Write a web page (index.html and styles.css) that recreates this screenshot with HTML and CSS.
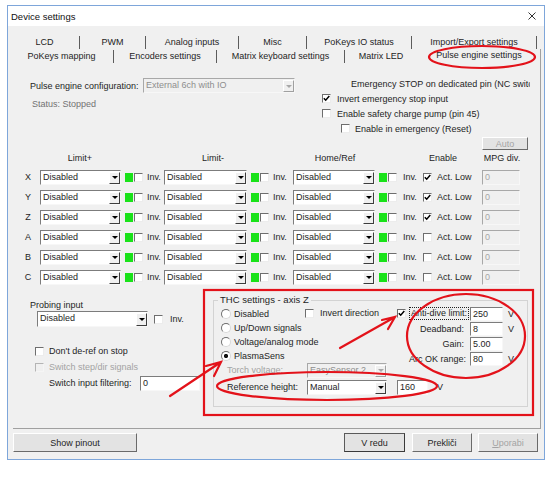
FILE: index.html
```html
<!DOCTYPE html>
<html>
<head>
<meta charset="utf-8">
<title>Device settings</title>
<link rel="stylesheet" href="styles.css">
</head>
<body>
<div class="window">
  <div class="titlebar">
    <span class="title">Device settings</span>
    <svg class="close" viewBox="0 0 8 8"><path d="M0.5 0.5L7.5 7.5M7.5 0.5L0.5 7.5"/></svg>
  </div>

  <div class="tabs">
    <div class="tabrow row1">
      <span class="tab">LCD</span>
      <span class="tab">PWM</span>
      <span class="tab">Analog inputs</span>
      <span class="tab">Misc</span>
      <span class="tab">PoKeys IO status</span>
      <span class="tab">Import/Export settings</span>
    </div>
    <div class="tabrow row2">
      <span class="tab">PoKeys mapping</span>
      <span class="tab">Encoders settings</span>
      <span class="tab">Matrix keyboard settings</span>
      <span class="tab nosep">Matrix LED</span>
      <span class="tab sel">Pulse engine settings</span>
    </div>
  </div>

  <div class="panel">
    <div class="top">
      <div class="top-left">
        <div class="cfg">
          <span class="cfg-label">Pulse engine configuration:</span>
          <span class="combo dis cfg-combo"><span class="v">External 6ch with IO</span><span class="dd"></span></span>
        </div>
        <div class="status">Status: Stopped</div>
      </div>
      <div class="top-right">
        <div class="estop">Emergency STOP on dedicated pin (NC switch)</div>
        <div class="chk"><span class="cb"><svg viewBox="0 0 7 7"><path d="M0.8 3.2L2.7 5.2L6.3 1"/></svg></span><span class="lbl">Invert emergency stop input</span></div>
        <div class="chk"><span class="cb"></span><span class="lbl">Enable safety charge pump (pin 45)</span></div>
        <div class="chk indent"><span class="cb"></span><span class="lbl">Enable in emergency (Reset)</span></div>
        <div class="btn auto dis-text">Auto</div>
      </div>
    </div>

    <div class="ghead">
      <span class="h-limp">Limit+</span>
      <span class="h-limm">Limit-</span>
      <span class="h-home">Home/Ref</span>
      <span class="h-en">Enable</span>
      <span class="h-mpg">MPG div.</span>
    </div>

    <div class="rows">
      <div class="axis">
        <span class="letter">X</span>
        <span class="combo c1"><span class="v">Disabled</span><span class="dd"></span></span>
        <span class="green"></span><span class="cb"></span><span class="inv">Inv.</span>
        <span class="combo c2"><span class="v">Disabled</span><span class="dd"></span></span>
        <span class="green"></span><span class="cb"></span><span class="inv inv2">Inv.</span>
        <span class="combo c3"><span class="v">Disabled</span><span class="dd"></span></span>
        <span class="green"></span><span class="cb"></span><span class="inv inv3">Inv.</span>
        <span class="cb"><svg viewBox="0 0 7 7"><path d="M0.8 3.2L2.7 5.2L6.3 1"/></svg></span><span class="act">Act. Low</span>
        <span class="inp dis mpg">0</span>
      </div>
      <div class="axis">
        <span class="letter">Y</span>
        <span class="combo c1"><span class="v">Disabled</span><span class="dd"></span></span>
        <span class="green"></span><span class="cb"></span><span class="inv">Inv.</span>
        <span class="combo c2"><span class="v">Disabled</span><span class="dd"></span></span>
        <span class="green"></span><span class="cb"></span><span class="inv inv2">Inv.</span>
        <span class="combo c3"><span class="v">Disabled</span><span class="dd"></span></span>
        <span class="green"></span><span class="cb"></span><span class="inv inv3">Inv.</span>
        <span class="cb"><svg viewBox="0 0 7 7"><path d="M0.8 3.2L2.7 5.2L6.3 1"/></svg></span><span class="act">Act. Low</span>
        <span class="inp dis mpg">0</span>
      </div>
      <div class="axis">
        <span class="letter">Z</span>
        <span class="combo c1"><span class="v">Disabled</span><span class="dd"></span></span>
        <span class="green"></span><span class="cb"></span><span class="inv">Inv.</span>
        <span class="combo c2"><span class="v">Disabled</span><span class="dd"></span></span>
        <span class="green"></span><span class="cb"></span><span class="inv inv2">Inv.</span>
        <span class="combo c3"><span class="v">Disabled</span><span class="dd"></span></span>
        <span class="green"></span><span class="cb"></span><span class="inv inv3">Inv.</span>
        <span class="cb"><svg viewBox="0 0 7 7"><path d="M0.8 3.2L2.7 5.2L6.3 1"/></svg></span><span class="act">Act. Low</span>
        <span class="inp dis mpg">0</span>
      </div>
      <div class="axis">
        <span class="letter">A</span>
        <span class="combo c1"><span class="v">Disabled</span><span class="dd"></span></span>
        <span class="green"></span><span class="cb"></span><span class="inv">Inv.</span>
        <span class="combo c2"><span class="v">Disabled</span><span class="dd"></span></span>
        <span class="green"></span><span class="cb"></span><span class="inv inv2">Inv.</span>
        <span class="combo c3"><span class="v">Disabled</span><span class="dd"></span></span>
        <span class="green"></span><span class="cb"></span><span class="inv inv3">Inv.</span>
        <span class="cb"></span><span class="act">Act. Low</span>
        <span class="inp dis mpg">0</span>
      </div>
      <div class="axis">
        <span class="letter">B</span>
        <span class="combo c1"><span class="v">Disabled</span><span class="dd"></span></span>
        <span class="green"></span><span class="cb"></span><span class="inv">Inv.</span>
        <span class="combo c2"><span class="v">Disabled</span><span class="dd"></span></span>
        <span class="green"></span><span class="cb"></span><span class="inv inv2">Inv.</span>
        <span class="combo c3"><span class="v">Disabled</span><span class="dd"></span></span>
        <span class="green"></span><span class="cb"></span><span class="inv inv3">Inv.</span>
        <span class="cb"></span><span class="act">Act. Low</span>
        <span class="inp dis mpg">0</span>
      </div>
      <div class="axis">
        <span class="letter">C</span>
        <span class="combo c1"><span class="v">Disabled</span><span class="dd"></span></span>
        <span class="green"></span><span class="cb"></span><span class="inv">Inv.</span>
        <span class="combo c2"><span class="v">Disabled</span><span class="dd"></span></span>
        <span class="green"></span><span class="cb"></span><span class="inv inv2">Inv.</span>
        <span class="combo c3"><span class="v">Disabled</span><span class="dd"></span></span>
        <span class="green"></span><span class="cb"></span><span class="inv inv3">Inv.</span>
        <span class="cb"></span><span class="act">Act. Low</span>
        <span class="inp dis mpg">0</span>
      </div>
    </div>

    <div class="bottom">
      <div class="bl">
        <div class="probe-label">Probing input</div>
        <div class="probe-row">
          <span class="combo probe-combo"><span class="v">Disabled</span><span class="dd"></span></span>
          <span class="cb"></span><span class="lbl">Inv.</span>
        </div>
        <div class="opts">
          <div class="opt"><span class="cb"></span><span class="lbl">Don't de-ref on stop</span></div>
          <div class="opt"><span class="cb dis"></span><span class="lbl dis-text">Switch step/dir signals</span></div>
          <div class="opt filter"><span class="filter-label">Switch input filtering:</span><span class="inp filter-input">0</span></div>
        </div>
      </div>

      <fieldset class="thc">
        <legend>THC settings - axis Z</legend>
        <div class="thc-top">
          <div class="radios">
            <div class="rrow"><span class="radio"></span><span class="lbl">Disabled</span></div>
            <div class="rrow"><span class="radio"></span><span class="lbl">Up/Down signals</span></div>
            <div class="rrow"><span class="radio"></span><span class="lbl">Voltage/analog mode</span></div>
            <div class="rrow"><span class="radio on"></span><span class="lbl">PlasmaSens</span></div>
          </div>
          <div class="invert">
            <div class="rrow"><span class="cb"></span><span class="lbl">Invert direction</span></div>
          </div>
          <div class="params">
            <span class="cb"><svg viewBox="0 0 7 7"><path d="M0.8 3.2L2.7 5.2L6.3 1"/></svg></span>
            <span class="plabel"><span class="focus">Anti-dive limit:</span></span>
            <span class="inp pin">250</span>
            <span class="unit">V</span>

            <span></span>
            <span class="plabel">Deadband:</span>
            <span class="inp pin">8</span>
            <span class="unit">V</span>

            <span></span>
            <span class="plabel">Gain:</span>
            <span class="inp pin">5.00</span>
            <span></span>

            <span></span>
            <span class="plabel">Arc OK range:</span>
            <span class="inp pin">80</span>
            <span class="unit">V</span>
          </div>
        </div>
        <div class="thc-row">
          <span class="tlabel dis-text">Torch voltage:</span>
          <span class="combo dis tcombo"><span class="v">EasySensor 2</span><span class="dd"></span></span>
        </div>
        <div class="thc-row ref">
          <span class="tlabel">Reference height:</span>
          <span class="combo tcombo"><span class="v">Manual</span><span class="dd"></span></span>
          <span class="inp refin">160</span>
          <span class="refv">V</span>
        </div>
      </fieldset>
    </div>
  </div>

  <div class="buttons">
    <div class="btn pinout">Show pinout</div>
    <div class="btn ok">V redu</div>
    <div class="btn cancel">Prekliči</div>
    <div class="btn apply dis-text"><u>U</u>porabi</div>
  </div>
</div>

<svg class="annot" viewBox="0 0 550 478" width="550" height="478">
  <g fill="none" stroke="#e3121a" stroke-width="2.2" stroke-linecap="round">
    <ellipse cx="482" cy="57" rx="53" ry="11"/>
    <rect x="204" y="290" width="329" height="125"/>
    <ellipse cx="466" cy="336" rx="59" ry="42"/>
    <ellipse cx="327" cy="386" rx="110" ry="14"/>
    <path d="M340 348L395 317M382 320L395 317L388 329"/>
    <path d="M170 396L221 362M206 366L221 362L214 376"/>
  </g>
</svg>
</body>
</html>
```

FILE: styles.css
```css
* { box-sizing: border-box; }

body {
  margin: 0;
  width: 550px;
  height: 478px;
  overflow: hidden;
  background: #ffffff;
  font-family: "Liberation Sans", Arial, sans-serif;
  font-size: 9px;
  color: #1e1e1e;
}

.window {
  margin: 5px 0 0 7px;
  width: 538px;
  height: 455px;
  border: 1px solid #7ea6da;
  background: #f0f0f0;
  display: flex;
  flex-direction: column;
}

.titlebar {
  height: 20px;
  flex: none;
  background: #ffffff;
  display: flex;
  align-items: center;
  padding-left: 3px;
  font-size: 9.5px;
  color: #111;
}

.close {
  width: 8px;
  height: 8px;
  margin-left: auto;
  margin-right: 8px;
  stroke: #333;
  stroke-width: 1;
  fill: none;
}

/* Tabs */
.tabs {
  margin-top: 9px;
  padding-left: 2px;
  flex: none;
}

.tabrow {
  display: grid;
  height: 14px;
  align-items: center;
}

.row1 { grid-template-columns: 70px 66px 93px 68px 105px 125px; }
.row2 { grid-template-columns: 104px 103px 128px 73px 123px; }

.tab {
  height: 13px;
  line-height: 13px;
  text-align: center;
  white-space: nowrap;
  border-right: 1px solid #5c5c5c;
}

.tab.nosep { border-right-color: transparent; }
.tab.sel { height: 14px; border-right-color: #a0a0a0; }

/* Panel */
.panel {
  margin-left: 5px;
  width: 528px;
  height: 366px;
  flex: none;
  border-right: 1px solid #a0a0a0;
  border-bottom: 1px solid #a0a0a0;
}

.top {
  display: flex;
  height: 87px;
}

.top-left {
  width: 282px;
  padding: 15px 0 0 17px;
}

.cfg {
  display: flex;
  align-items: center;
  height: 15px;
}

.cfg-label { width: 113px; white-space: nowrap; }
.cfg-combo { width: 152px; height: 15px; }

.status {
  margin: 5px 0 0 2px;
  line-height: 12px;
  color: #727272;
}

.top-right {
  margin-left: 27px;
  width: 208px;
  padding-top: 15px;
  overflow: hidden;
}

.estop {
  height: 13px;
  line-height: 13px;
  padding-left: 29px;
  white-space: nowrap;
}

.chk {
  display: flex;
  align-items: center;
  height: 15px;
  white-space: nowrap;
}

.chk .lbl { margin-left: 6px; }
.chk.indent { padding-left: 19px; }
.chk.indent .lbl { margin-left: 5px; }

.auto {
  margin: 1px 0 0 160px;
  width: 46px;
  height: 13px;
}

/* Grid header */
.ghead {
  display: flex;
  align-items: center;
  height: 12px;
  margin-top: 2px;
  white-space: nowrap;
}

.ghead span { text-align: center; }
.h-limp { margin-left: 27px; width: 80px; }
.h-limm { margin-left: 53px; width: 80px; }
.h-home { margin-left: 42px; width: 80px; }
.h-en { margin-left: 48px; width: 40px; }
.h-mpg { margin-left: 19px; width: 40px; }

.rows { margin-top: 3px; }

.axis {
  display: flex;
  align-items: center;
  height: 20px;
}

.letter {
  width: 16px;
  margin-left: 7px;
  text-align: center;
}

.axis .combo { height: 15px; }
.c1 { margin-left: 4px; width: 81px; }
.c2 { width: 83px; }
.c3 { width: 82px; }

.green {
  flex: none;
  width: 8px;
  height: 9px;
  margin-left: 4px;
  background: #19e219;
}

.green + .cb { margin-left: 1px; }

.inv { margin-left: 4px; width: 17px; flex: none; }
.inv2 { width: 20px; }
.inv3 { margin-left: 6px; width: 20px; }

.act { margin-left: 5px; width: 40px; white-space: nowrap; flex: none; }
.mpg { margin-left: 5px; width: 38px; height: 15px; }

/* Controls */
.combo {
  flex: none;
  display: flex;
  align-items: stretch;
  background: #ffffff;
  border: 1px solid;
  border-color: #7c7c7c #f7f7f7 #f7f7f7 #7c7c7c;
}

.combo .v {
  flex: 1;
  padding-left: 2px;
  line-height: 13px;
  overflow: hidden;
  white-space: nowrap;
}

.combo .dd {
  flex: none;
  width: 11px;
  margin: 1px 0 0 0;
  background: #f0f0f0;
  border: 1px solid;
  border-color: #ffffff #3c3c3c #3c3c3c #ffffff;
  display: flex;
  align-items: center;
  justify-content: center;
}

.combo .dd::after {
  content: "";
  border-left: 3px solid transparent;
  border-right: 3px solid transparent;
  border-top: 3px solid #000;
}

.combo.dis {
  background: #f0f0f0;
  color: #8e8e8e;
  border-color: #a8a8a8 #f7f7f7 #f7f7f7 #a8a8a8;
}

.combo.dis .dd { border-color: #ffffff #a0a0a0 #a0a0a0 #ffffff; }
.combo.dis .dd::after { border-top-color: #a8a8a8; }

.cb {
  flex: none;
  width: 9px;
  height: 9px;
  background: #ffffff;
  border: 1px solid;
  border-color: #6e6e6e #ececec #ececec #6e6e6e;
  display: flex;
  align-items: center;
  justify-content: center;
}

.cb svg {
  width: 7px;
  height: 7px;
  fill: none;
  stroke: #000;
  stroke-width: 1.5;
}

.cb.dis {
  background: #f0f0f0;
  border-color: #b4b4b4 #f5f5f5 #f5f5f5 #b4b4b4;
}

.inp {
  flex: none;
  background: #ffffff;
  border: 1px solid;
  border-color: #7c7c7c #f7f7f7 #f7f7f7 #7c7c7c;
  padding-left: 2px;
  line-height: 13px;
  white-space: nowrap;
}

.inp.dis {
  background: #f0f0f0;
  color: #a6a6a6;
  border-color: #a8a8a8 #f7f7f7 #f7f7f7 #a8a8a8;
}

.dis-text { color: #a3a3a3; }

.btn {
  flex: none;
  background: #e3e3e3;
  border: 1px solid;
  border-color: #ffffff #6a6a6a #6a6a6a #ffffff;
  display: flex;
  align-items: center;
  justify-content: center;
  white-space: nowrap;
}

/* Bottom section */
.bottom {
  display: flex;
  height: 141px;
}

.bl { width: 200px; flex: none; }

.probe-label {
  margin: 12px 0 0 17px;
  line-height: 12px;
}

.probe-row {
  display: flex;
  align-items: center;
  height: 16px;
  margin-left: 24px;
}

.probe-combo { width: 111px; height: 16px; }
.probe-row .cb { margin-left: 6px; }
.probe-row .lbl { margin-left: 7px; }

.opts { margin-top: 16px; }

.opt {
  display: flex;
  align-items: center;
  height: 16px;
  margin-left: 22px;
  white-space: nowrap;
}

.opt .lbl { margin-left: 5px; }

.opt.filter { margin-left: 36px; }
.filter-label { width: 91px; }
.filter-input { width: 60px; height: 15px; }

/* THC group */
.thc {
  margin: 7px 0 0 0;
  padding: 0;
  min-width: 0;
  width: 315px;
  height: 113px;
  border: 1px solid #d3d3d3;
}

.thc legend {
  margin-left: 4px;
  padding: 0 2px;
  line-height: 12px;
  font-size: 9.5px;
}

.thc-top {
  display: flex;
  height: 56px;
}

.radios {
  width: 91px;
  padding: 1px 0 0 7px;
}

.rrow {
  display: flex;
  align-items: center;
  height: 14px;
  white-space: nowrap;
}

.radio {
  flex: none;
  width: 10px;
  height: 10px;
  border-radius: 50%;
  border: 1px solid;
  border-color: #6e6e6e #d8d8d8 #d8d8d8 #6e6e6e;
  background: #ffffff;
}

.radio.on {
  background: radial-gradient(circle, #111 0 1.8px, #ffffff 2.4px);
}

.rrow .lbl { margin-left: 3px; }

.invert { width: 92px; flex: none; }
.invert .lbl { margin-left: 6px; }

.params {
  display: grid;
  grid-template-columns: 12px 61px 38px 12px;
  grid-auto-rows: 15px;
  align-items: center;
  white-space: nowrap;
}

.plabel {
  text-align: right;
  padding-right: 6px;
}

.focus {
  display: inline-block;
  border: 1px dotted #222;
  padding: 0 1px 0 1px;
  line-height: 11px;
}

.pin { width: 33px; height: 14px; }

.thc-row {
  display: flex;
  align-items: center;
  height: 16px;
  margin-left: 13px;
  white-space: nowrap;
}

.thc-row.ref { margin-top: 1px; }
.tlabel { width: 80px; flex: none; }
.tcombo { width: 80px; height: 15px; }
.refin { margin-left: 10px; width: 31px; height: 15px; }
.refv { margin-left: 9px; }

/* Buttons */
.buttons {
  display: flex;
  height: 19px;
  margin-top: 4px;
  padding: 0 6px 0 5px;
  flex: none;
}

.buttons .btn { height: 19px; }
.pinout { width: 124px; }
.ok { margin-left: auto; width: 61px; border-color: #5a5a5a #3a3a3a #3a3a3a #5a5a5a; }
.cancel { margin-left: 7px; width: 60px; }
.apply { margin-left: 6px; width: 60px; }

/* Annotations drawn over the screenshot */
.annot {
  position: absolute;
  top: 0;
  left: 0;
  pointer-events: none;
}
```
